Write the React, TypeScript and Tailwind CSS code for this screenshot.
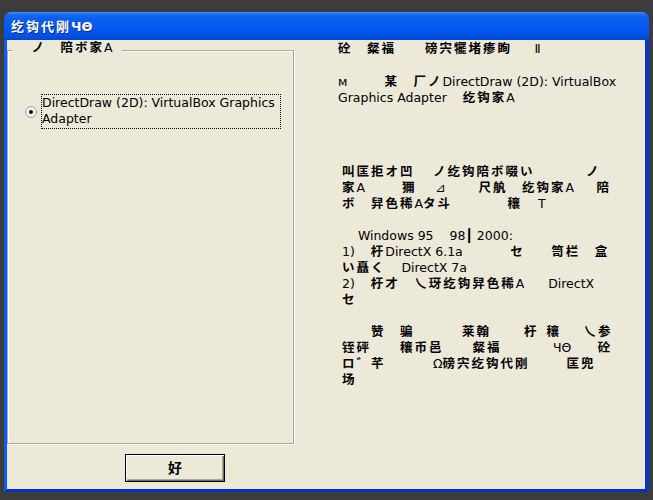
import type { ReactNode } from "react";

// CJK runs get a little extra advance, like the bitmap font in the dialog
const CJK = /([\u2E80-\u9FFF\uF900-\uFAFF\uFF00-\uFFEF]+)/;

function Mixed({ text }: { text: string }) {
  const parts: ReactNode[] = text.split(CJK).map((part, i) =>
    i % 2 === 1 ? (
      <span key={i} className="tracking-[2px] font-bold">
        {part}
      </span>
    ) : (
      part
    )
  );
  return <>{parts}</>;
}

function Lines({ lines }: { lines: string[] }) {
  return (
    <div>
      {lines.map((line, i) => (
        <div key={i} className="h-4 leading-4 whitespace-pre">
          <Mixed text={line} />
        </div>
      ))}
    </div>
  );
}

const info = [
  "叫匡拒オ凹　 ノ纥钩陪ボ啜い　　　  ノ",
  "家A　　  獮　 ⊿　　 尺舧　纥钩家A　  陪",
  "ボ　舁色稀Aタ斗　　　   穰    T",
  "",
  "    Windows 95    98┃ 2000:",
  "1)    杅DirectX 6.1a　　　 セ　   笥栏　盒",
  "い矗く    DirectX 7a",
  "2)    杅才　乀玡纥钩舁色稀A      DirectX",
  "セ",
  "",
  "　　赞　骗　　　 莱翰　　 杅  穰　  乀参",
  "铚砰　　穰币邑　　粲福　　　  ЧΘ　   砼",
  "ロ゛芊　　　 Ω磅宍纥钩代刚　　  匡兜",
  "场",
];

export default function App() {
  return (
    <div className="w-[653px] h-[500px] bg-[#3c3c3c] pt-[12px] pl-[4px] font-['DejaVu_Sans','Noto_Sans_CJK_SC',sans-serif] text-[12.5px] text-black">
      <div className="w-[645px] h-[480px] flex flex-col">
        {/* Title bar */}
        <div className="h-[28px] shrink-0 rounded-t-[7px] bg-[linear-gradient(to_bottom,#4a94f6_0%,#1a6ef2_8%,#0a5ff0_22%,#0458ec_60%,#0052e4_85%,#0046d2_100%)] flex items-center pl-[7px] pt-[2px] text-white font-bold text-[13px] [text-shadow:1px_1px_0_#0c2a9a]">
          <Mixed text="纥钩代刚ЧΘ" />
        </div>

        {/* Client area */}
        <div className="flex-1 flex border-l-[3px] border-r-[4px] border-b-[3px] border-l-[#0b5cf0] border-r-[#0936d0] border-b-[#0831c4] bg-[#ece9d8]">
          <div className="w-[288px] shrink-0 flex flex-col">
            <div className="relative mt-[10px] w-[287px] h-[394px] border border-[#aca899] shadow-[1px_1px_0_#fff,inset_1px_1px_0_#fff]">
              <div className="absolute left-[4px] -top-[11px] h-4 leading-4 whitespace-pre bg-[#ece9d8] pl-[5px] pr-[9px]">
                <Mixed text="　ノ　陪ボ家A" />
              </div>

              <div className="flex items-center pt-[43px] pl-[17px] gap-[4px]">
                <svg width="12" height="12" viewBox="0 0 12 12" className="shrink-0">
                  <circle cx="6" cy="6" r="5.5" fill="#fff" stroke="#a7a69b" />
                  <circle cx="6" cy="6" r="4.5" fill="none" stroke="#dcdacd" />
                  <circle cx="6" cy="6" r="2" fill="#000" />
                </svg>
                <div className="w-[240px] h-[35px] border border-dotted border-black">
                  <div className="h-4 leading-4 whitespace-pre">DirectDraw (2D): VirtualBox Graphics</div>
                  <div className="h-4 leading-4 whitespace-pre">Adapter</div>
                </div>
              </div>
            </div>

            <button className="mt-[10px] ml-[118px] w-[100px] h-[28px] border border-black bg-[#ece9d8] shadow-[inset_1px_1px_0_#fff,inset_-1px_-1px_0_#716f64,inset_-2px_-2px_0_#aca899] flex items-center justify-center text-[14px] font-bold">
              好
            </button>
          </div>

          {/* Right text */}
          <div className="ml-[43px] pt-[1px]">
            <Lines lines={["砼　粲福　　磅宍犤堵瘆眴　  Ⅱ"]} />
            <div className="mt-[17px]">
              <Lines lines={["м　　  某　厂ノDirectDraw (2D): VirtualBox", "Graphics Adapter    纥钩家A"]} />
            </div>
            <div className="mt-[58px] ml-[4px]">
              <Lines lines={info} />
            </div>
          </div>
        </div>
      </div>
    </div>
  );
}
